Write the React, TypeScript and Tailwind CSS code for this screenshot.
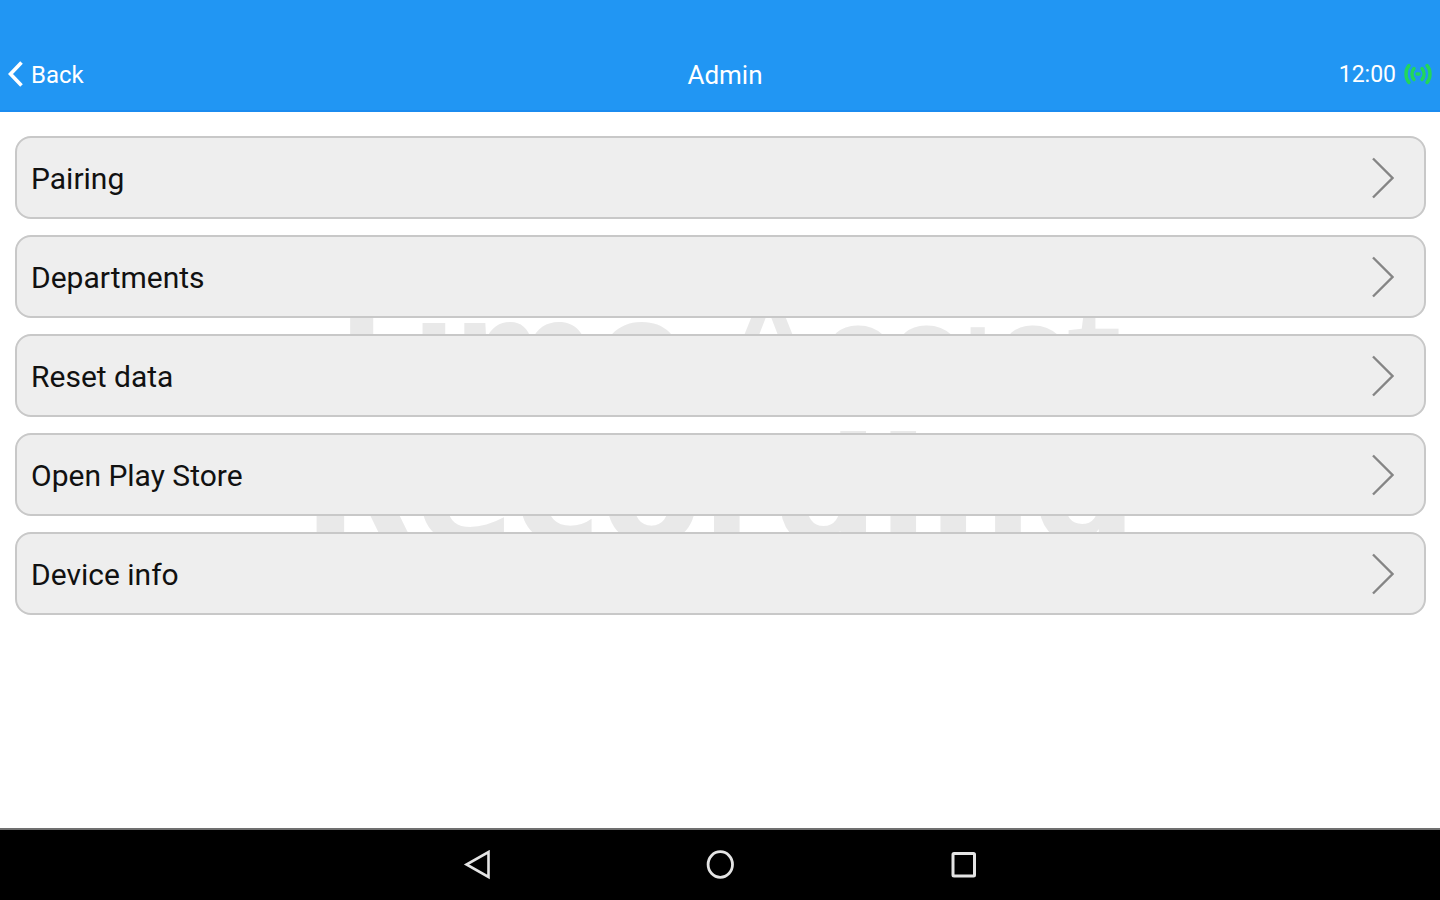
const menuItems = ["Pairing", "Departments", "Reset data", "Open Play Store", "Device info"];

const SignalIcon = () => (
  <svg width="28" height="22" viewBox="0 0 28 22" fill="none" stroke="#22d65b" strokeWidth="3.4" strokeLinecap="round" aria-hidden="true">
    <path d="M5 2.5C1 7 1 15 5 19.5" />
    <path d="M10 5.5C7.2 8.5 7.2 13.5 10 16.5" />
    <path d="M23 2.5C27 7 27 15 23 19.5" />
    <path d="M18 5.5C20.8 8.5 20.8 13.5 18 16.5" />
    <path d="M13 11H15" />
  </svg>
);

const App = () => {
  return (
    <div className="min-h-screen flex flex-col bg-white font-['Roboto',sans-serif]">
      {/* Header */}
      <header className="bg-[#2196f3] pt-[38px] border-b-2 border-[#1b8cf0]">
        <div className="grid grid-cols-3 items-center h-[72px] px-2 text-white">
          <button className="flex items-center gap-2 justify-self-start text-2xl">
            <svg width="15" height="26" viewBox="0 0 15 26" fill="none" stroke="currentColor" strokeWidth="3.6" aria-hidden="true">
              <path d="M13.5 1.5L2.5 13L13.5 24.5" />
            </svg>
            <span className="pt-0.5">Back</span>
          </button>
          <h1 className="text-center text-[26px] pl-2.5 pt-0.5">Admin</h1>
          <div className="flex items-center gap-2 justify-self-end text-[23px]">
            <span className="pt-0.5">12:00</span>
            <SignalIcon />
          </div>
        </div>
      </header>

      {/* Menu */}
      <main className="relative flex-1 pl-[15px] pr-3.5 pt-6">
        <div className="absolute inset-x-0 top-[164px] flex flex-col items-center font-bold leading-[140px] text-[#e9e9e9] select-none" aria-hidden="true">
          <div className="flex items-baseline gap-7 pr-2">
            <span className="font-['Inter',sans-serif] text-[154px]">Time</span>
            <span className="font-['Lato',sans-serif] font-normal text-[158px]">Assist</span>
          </div>
          <div className="font-['DejaVu_Sans',sans-serif] text-[146px]">Recording</div>
        </div>

        <ul className="relative flex flex-col gap-4">
          {menuItems.map((item) => (
            <li key={item}>
              <button className="flex w-full h-[83px] items-center justify-between rounded-2xl border-2 border-[#c8c8c8] bg-[#eeeeee] pl-3.5 pr-[30px] text-left text-[30px] text-[#111111]">
                <span className="pt-0.5">{item}</span>
                <svg width="22" height="42" viewBox="0 0 22 42" fill="none" stroke="#858585" strokeWidth="2.4" aria-hidden="true">
                  <path d="M1 1.5L20.5 21L1 40.5" />
                </svg>
              </button>
            </li>
          ))}
        </ul>
      </main>

      {/* Navigation bar */}
      <nav className="flex h-[72px] items-center justify-center gap-[215px] border-t-2 border-[#707070] bg-black text-[#e4e4e4]">
        <button aria-label="Back">
          <svg width="28" height="30" viewBox="0 0 28 30" fill="none" stroke="currentColor" strokeWidth="2.6">
            <path d="M25.5 2V27L3.5 14.5Z" />
          </svg>
        </button>
        <button aria-label="Home">
          <svg width="28" height="30" viewBox="0 0 28 30" fill="none" stroke="currentColor" strokeWidth="2.8">
            <ellipse cx="14.3" cy="14.5" rx="12.2" ry="12.8" />
          </svg>
        </button>
        <button aria-label="Recents">
          <svg width="28" height="30" viewBox="0 0 28 30" fill="none" stroke="currentColor" strokeWidth="3">
            <rect x="4" y="3.5" width="21.5" height="22.5" rx="1" />
          </svg>
        </button>
      </nav>
    </div>
  );
};

export default App;
